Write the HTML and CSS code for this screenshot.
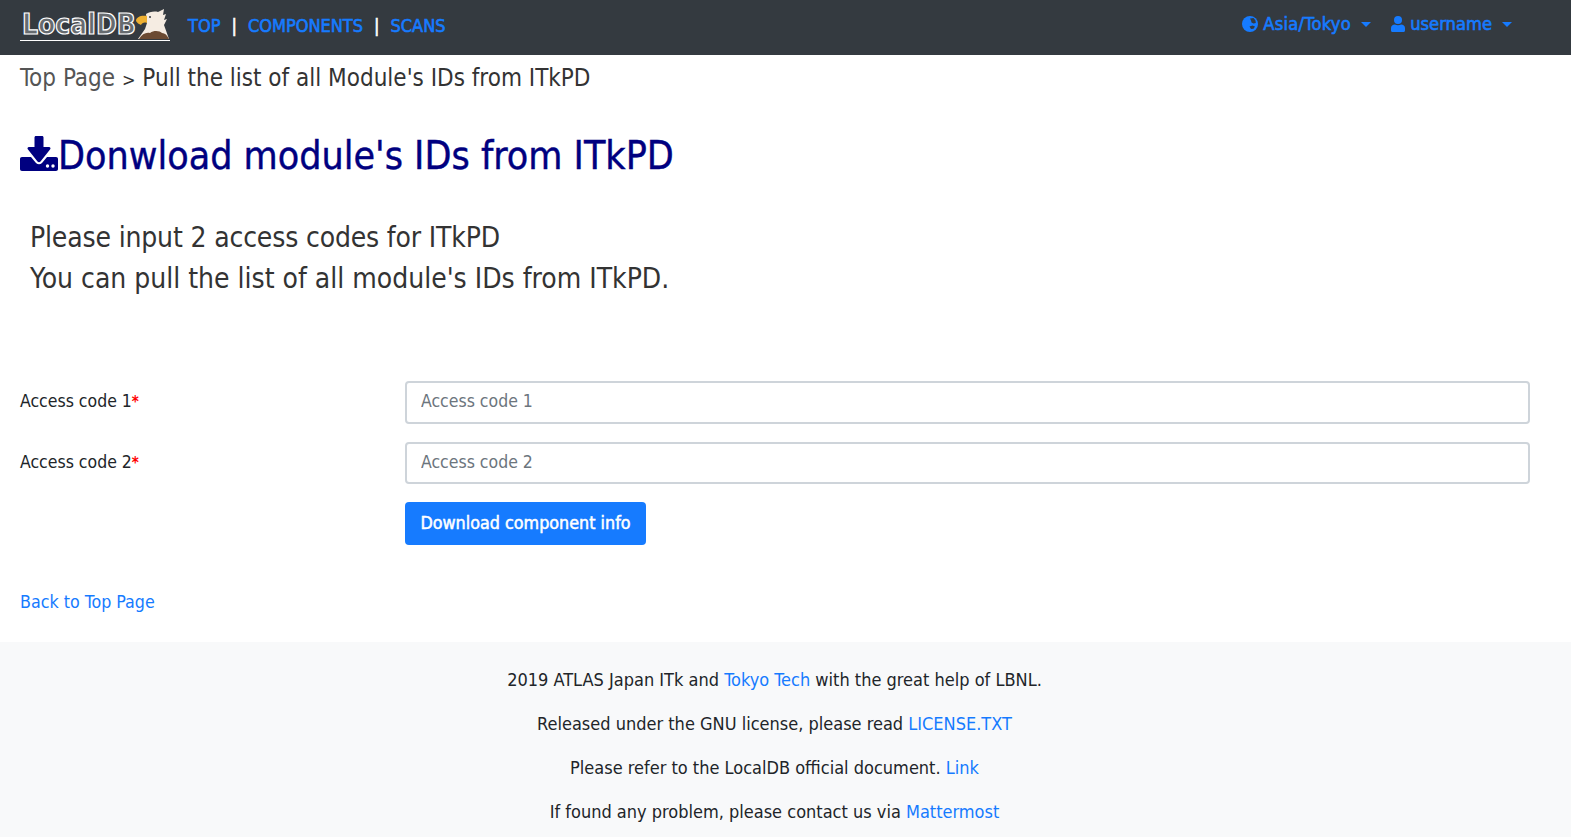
FILE: index.html
```html
<!DOCTYPE html>
<html lang="en">
<head>
  <meta charset="UTF-8">
  <title>Download module IDs</title>
  <link rel="stylesheet" href="styles.css">
</head>
<body>
  <nav class="navbar">
    <a class="brand" href="#">
      <span class="brand-text">LocalDB</span>
      <svg class="eagle" width="34" height="31" viewBox="0 0 34 31">
        <path d="M10 5 C13 3 18 2 22 3 L28 0 L27 6 L30 5 L28 11 L31 10 L28 16 L33 30 L2 30 L9 20 L11 14 Z" fill="#f5ece2"/>
        <path d="M3 30 C6 25 10 23 14 24 C18 21 24 22 26 24 C29 24 31 26 33 30 Z" fill="#6b4a32"/>
        <path d="M0 12 C0 8 5 6 11 7 L11 14 C8 13 6 14 5 16 C3 15 1 14 0 12 Z" fill="#eeb031"/>
        <circle cx="14" cy="8" r="1" fill="#343a40"/>
      </svg>
    </a>
    <ul class="nav-links">
      <li><a href="#">TOP</a></li>
      <li class="sep">|</li>
      <li><a href="#">COMPONENTS</a></li>
      <li class="sep">|</li>
      <li><a href="#">SCANS</a></li>
    </ul>
    <ul class="nav-right">
      <li>
        <a href="#">
          <svg class="nav-icon" width="16" height="16" viewBox="0 0 16 16">
            <circle cx="8" cy="8" r="8" fill="#167bff"/>
            <path d="M8 2.500 L11.500 2 L13.500 4.500 L13.800 7 L11.500 7.500 L9.500 6.500 L9 4.500 Z" fill="#343a40"/>
            <path d="M7.500 10.500 L10.500 9.500 L13 10.500 L11.500 12.800 L9 13 Z" fill="#343a40"/>
          </svg>
          <span class="tz">Asia/Tokyo</span><span class="caret"></span>
        </a>
      </li>
      <li>
        <a href="#">
          <svg class="nav-icon" width="14" height="16" viewBox="0 0 14 16">
            <circle cx="7" cy="4" r="4" fill="#167bff"/>
            <path d="M0 14.5 V12 C0 9.8 1.8 8.5 3.8 8.5 C5.8 9.5 8.2 9.5 10.2 8.5 C12.2 8.5 14 9.8 14 12 V14.5 C14 15.4 13.4 16 12.5 16 H1.5 C.6 16 0 15.4 0 14.5 Z" fill="#167bff"/>
          </svg>
          username<span class="caret"></span>
        </a>
      </li>
    </ul>
  </nav>

  <div class="content">
    <p class="crumbs"><a href="#">Top Page</a> <span class="crumb-sep">&gt;</span> Pull the list of all Module's IDs from ITkPD</p>

    <h1 class="title">
      <svg width="38" height="35" viewBox="0 0 38 35">
        <path d="M16 0 H22 C23 0 23.500 .6 23.500 1.500 V11 H29 C30.500 11 31 12.500 30 13.500 L20.500 25.500 C19.600 26.500 18.400 26.500 17.500 25.500 L8 13.500 C7 12.500 7.500 11 9 11 H14.500 V1.500 C14.500 .6 15 0 16 0 Z" fill="#000080"/>
        <path d="M2 21 H11 L16 27 C17.800 28.800 20.200 28.800 22 27 L27 21 H36 C37.200 21 38 21.800 38 23 V33 C38 34.200 37.200 35 36 35 H2 C.8 35 0 34.200 0 33 V23 C0 21.800 .8 21 2 21 Z" fill="#000080"/>
        <circle cx="27.500" cy="30" r="1.700" fill="#fff"/>
        <circle cx="33" cy="30" r="1.700" fill="#fff"/>
      </svg>Donwload module's IDs from ITkPD
    </h1>

    <p class="intro"><span class="intro-first">Please input 2 access codes for ITkPD</span><br>You can pull the list of all module's IDs from ITkPD.</p>

    <form class="code-form">
      <div class="form-row">
        <label for="code1">Access code 1<span class="req">*</span></label>
        <input type="text" id="code1" placeholder="Access code 1">
      </div>
      <div class="form-row">
        <label for="code2">Access code 2<span class="req">*</span></label>
        <input type="text" id="code2" placeholder="Access code 2">
      </div>
      <div class="form-row">
        <span></span>
        <div><button type="submit">Download component info</button></div>
      </div>
    </form>

    <p class="back"><a href="#">Back to Top Page</a></p>
  </div>

  <footer class="footer">
    <p>2019 ATLAS Japan ITk and <a href="#">Tokyo Tech</a> with the great help of LBNL.</p>
    <p>Released under the GNU license, please read <a href="#">LICENSE.TXT</a></p>
    <p>Please refer to the LocalDB official document. <a href="#">Link</a></p>
    <p>If found any problem, please contact us via <a href="#">Mattermost</a></p>
  </footer>
</body>
</html>
```

FILE: styles.css
```css
* {
  box-sizing: border-box;
}
body {
  margin: 0;
  font-family: "DejaVu Sans", Verdana, sans-serif;
  font-stretch: condensed;
  font-size: 17.5px;
  line-height: 1.5;
  color: #212529;
  background: #fff;
}
a {
  color: #167bff;
  text-decoration: none;
}
p {
  margin: 0;
}
.navbar {
  display: flex;
  align-items: center;
  height: 55px;
  padding: 0 20px;
  background: #343a40;
}
.brand {
  display: flex;
  align-items: flex-end;
  justify-content: space-between;
  height: 33px;
  width: 150px;
  border-bottom: 1px solid #fff;
  margin-bottom: 6px;
  overflow: hidden;
}
.brand-text {
  font-weight: bold;
  font-size: 28px;
  line-height: 31px;
  margin-left: 2px;
  color: rgba(255, 255, 255, .25);
  -webkit-text-stroke: 1.2px #fff;
}
.eagle {
  flex: none;
}
.nav-links {
  display: flex;
  gap: 11px;
  list-style: none;
  margin: -4px 0 0 18px;
  padding: 0;
  font-size: 18px;
  -webkit-text-stroke: .6px currentColor;
}
.sep {
  color: #fff;
}
.nav-right {
  display: flex;
  gap: 20px;
  list-style: none;
  margin: -8px 39px 0 auto;
  padding: 0;
  font-size: 18.2px;
  -webkit-text-stroke: .6px currentColor;
}
.nav-right a {
  color: #167bff;
}
.tz {
  letter-spacing: .25px;
}
.nav-icon {
  vertical-align: -2px;
  stroke: none;
}
.caret {
  display: inline-block;
  margin-left: 10px;
  vertical-align: 3px;
  border-top: 5px solid #167bff;
  border-left: 5px solid transparent;
  border-right: 5px solid transparent;
}
.content {
  padding: 0 20px;
}
.crumbs {
  margin-top: 5px;
  font-size: 24px;
  line-height: 36px;
  color: #333;
}
.crumbs a {
  color: #555;
}
.crumb-sep {
  font-size: 18px;
}
.title {
  display: flex;
  align-items: flex-end;
  margin: 33px 0 0;
  font-size: 39px;
  font-weight: normal;
  line-height: 50px;
  color: #000080;
  -webkit-text-stroke: .4px #000080;
}
.title svg {
  margin-bottom: 10px;
}
.intro {
  margin: 36px 0 0 10px;
  font-size: 28px;
  line-height: 41px;
  color: #333;
}
.intro-first {
  letter-spacing: -.16px;
}
.code-form {
  margin-top: 82px;
}
.form-row {
  display: grid;
  grid-template-columns: 385px 1125px;
  margin-bottom: 18px;
}
label {
  line-height: 41px;
  height: 42px;
  color: #212529;
}
.req {
  color: #f00;
  font-weight: bold;
  font-size: 15px;
}
input {
  display: block;
  width: 100%;
  height: 42.5px;
  padding: 0 14px 2px;
  font: inherit;
  color: #495057;
  border: 2px solid #ced4da;
  border-radius: 4px;
}
input::placeholder {
  color: #6c757d;
  opacity: 1;
}
button {
  height: 43px;
  width: 241px;
  padding: 0;
  font: inherit;
  font-size: 17.8px;
  color: #fff;
  -webkit-text-stroke: .5px #fff;
  background: #167bff;
  border: none;
  border-radius: 4px;
  cursor: pointer;
}
.back {
  margin-top: 44px;
  line-height: 26px;
  font-size: 17.7px;
}
.footer {
  margin-top: 27px;
  padding: 25px 22px 0 0;
  height: 196px;
  background: #f8f9fa;
  text-align: center;
  overflow: hidden;
  font-size: 18px;
}
.footer p {
  line-height: 26px;
  margin-bottom: 18px;
}
```
